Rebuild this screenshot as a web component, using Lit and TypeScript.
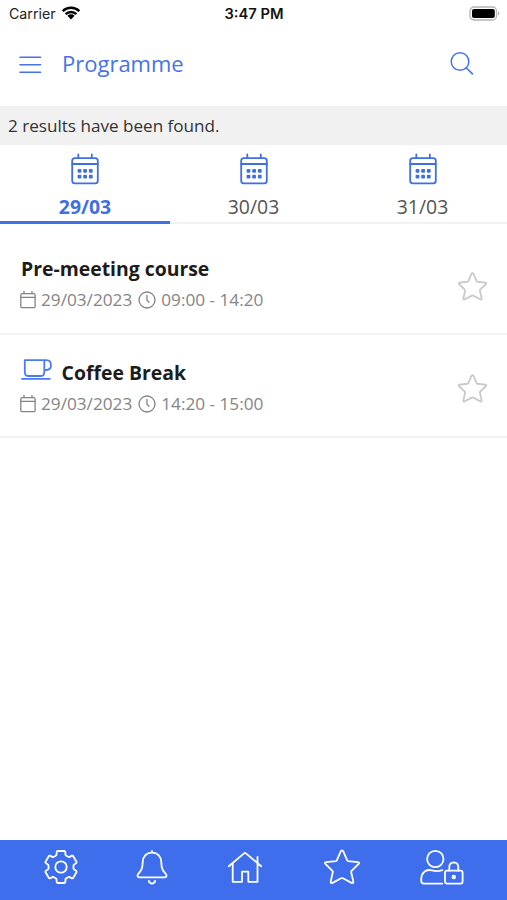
import { LitElement, html, css, svg, nothing } from "lit";
import { customElement, property } from "lit/decorators.js";

interface Session {
  title: string;
  date: string;
  time: string;
  coffee: boolean;
}

const DAYS = ["29/03", "30/03", "31/03"];

const SESSIONS: Session[] = [
  { title: "Pre-meeting course", date: "29/03/2023", time: "09:00 - 14:20", coffee: false },
  { title: "Coffee Break", date: "29/03/2023", time: "14:20 - 15:00", coffee: true },
];

/* Outline of a six-toothed cog centred on 0,0 */
const cogPath = (): string => {
  const tooth = [[-5.8, -11], [-4.5, -12], [-4.3, -15.2], [-3.5, -16], [3.5, -16], [4.3, -15.2], [4.5, -12], [5.8, -11]];
  const pts: string[] = [];
  for (let i = 0; i < 6; i++) {
    const a = (i * Math.PI) / 3;
    for (const [x, y] of tooth) {
      pts.push(`${(x * Math.cos(a) - y * Math.sin(a)).toFixed(2)} ${(x * Math.sin(a) + y * Math.cos(a)).toFixed(2)}`);
    }
  }
  return `M${pts.join("L")}Z`;
};

const STAR = "M18 1.3Q18.8 1.3 19.3 2.4L23.2 11.4Q23.5 12 24.2 12.1L33.8 13.1Q36 13.5 34.4 15.2L27.6 21.8Q27 22.4 27.2 23.2L29.3 32.6Q29.5 34.8 27.5 33.9L18.9 29.3Q18 28.9 17.1 29.3L8.5 33.9Q6.5 34.8 6.7 32.6L8.8 23.2Q9 22.4 8.4 21.8L1.6 15.2Q0 13.5 2.2 13.1L11.8 12.1Q12.5 12 12.8 11.4L16.7 2.4Q17.2 1.3 18 1.3Z";

const ICONS = {
  wifi: { w: 20, h: 14, body: svg`<g fill="none" stroke="currentColor" stroke-width="2.5"><path d="M1.7 5.1A12 12 0 0 1 18.3 5.1"/><path d="M4.6 8.2A7.8 7.8 0 0 1 15.4 8.2"/></g><path fill="currentColor" d="M6.4 9.8A5.2 5.2 0 0 1 13.6 9.8L10 13.6Z"/>` },
  battery: { w: 32, h: 16, body: svg`<rect x="1" y="1" width="26.5" height="13" rx="4" fill="#fff" stroke="#b4b4b4" stroke-width="1.3"/><rect x="3" y="3" width="22.8" height="9" rx="2" fill="#000"/><path d="M29 5.3Q31.6 7.5 29 9.7Z" fill="#aaa"/>` },
  menu: { w: 24, h: 20, body: svg`<path d="M2 2.2H22.5M2 9.7H22.5M2 17.3H22.5"/>` },
  search: { w: 26, h: 26, body: svg`<circle cx="11" cy="10.5" r="8.8"/><path d="M17.2 16.8L23.4 22.9"/>` },
  calendar: { w: 30, h: 34, body: svg`<rect x="2.2" y="6.2" width="25.6" height="25.2" rx="2.6"/><path d="M2.2 12H27.8M8.3 2.4V6.2M21.8 2.4V6.2"/><g fill="currentColor" stroke="none"><rect x="7.6" y="16.9" width="3.8" height="3.8" rx="1"/><rect x="13.2" y="16.9" width="3.8" height="3.8" rx="1"/><rect x="18.9" y="16.9" width="3.8" height="3.8" rx="1"/><rect x="7.6" y="22.7" width="3.8" height="3.8" rx="1"/><rect x="13.2" y="22.7" width="3.8" height="3.8" rx="1"/><rect x="18.9" y="22.7" width="3.8" height="3.8" rx="1"/></g>` },
  date: { w: 16, h: 18, body: svg`<rect x=".8" y="2.7" width="14.3" height="14" rx="1.3"/><path d="M.8 6.3H15.1M4 .5V2.7M12 .5V2.7"/>` },
  clock: { w: 18, h: 18, body: svg`<circle cx="9" cy="9" r="8"/><path d="M9 4.4V9.2L11 11.2"/>` },
  cup: { w: 32, h: 22, body: svg`<path d="M3.8 1.2H23.3V13.2Q23.3 17 19.5 17H7.6Q3.8 17 3.8 13.2ZM23.3 1.2H25.2Q30 1.4 30 6.2Q30 10.8 25.2 11H23.3M1 19.9H28.8"/>` },
  star: { w: 36, h: 36, body: svg`<path d=${STAR}/>` },
  cog: { w: 36, h: 36, body: svg`<g transform="translate(18 18)"><path d=${cogPath()}/><circle r="5.7"/></g>` },
  bell: { w: 32, h: 36, body: svg`<path d="M16 1.8V3.6M16 3.6C10.3 3.6 6.7 7.8 6.7 13.2C6.7 20 4.6 22.3 2.2 25C1 26.4 1.3 28.3 3.2 28.3H28.8C30.7 28.3 31 26.4 29.8 25C27.4 22.3 25.3 20 25.3 13.2C25.3 7.8 21.7 3.6 16 3.6ZM12.8 31.8Q13.5 34.6 16 34.6Q18.5 34.6 19.2 31.8"/>` },
  home: { w: 36, h: 36, body: svg`<path d="M1.8 17.2L17.1 4.4Q18 3.7 18.9 4.4L34.2 17.2M5.7 14.2V32.8H15V22.7H21.3V32.8H30.5V14.2M30.5 13.8V8"/>` },
  profile: { w: 46, h: 38, body: svg`<circle cx="16.3" cy="10" r="8.2"/><path d="M23.3 21.2C20.4 22.2 15.8 22.2 12.8 21.3C6 19.8 2.2 24.4 2.2 30.5V31.8Q2.2 34.6 5 34.6H23.3"/><rect x="26" y="21.7" width="17.6" height="12.9" rx="2"/><path d="M30.3 21.7V17.8Q30.5 13.4 34.8 13.3Q39 13.4 39.3 17.8V21.7"/><circle cx="34.8" cy="28" r="1.3" fill="currentColor"/>` },
};

type IconName = keyof typeof ICONS;

@customElement("ui-icon")
class UiIcon extends LitElement {
  @property() name: IconName = "star";

  static styles = css`
    :host { display: block; flex: none; }
    .glyph {
      display: block; width: 100%; height: 100%; fill: none; stroke: currentColor;
      stroke-width: var(--stroke, 1.8); stroke-linecap: round; stroke-linejoin: round;
    }
    .plain { stroke: none; stroke-linecap: butt; }
  `;

  render() {
    const icon = ICONS[this.name];
    const plain = this.name === "wifi" || this.name === "battery";
    return html`<svg class=${plain ? "glyph plain" : "glyph"} viewBox="0 0 ${icon.w} ${icon.h}">${icon.body}</svg>`;
  }
}

@customElement("session-row")
class SessionRow extends LitElement {
  @property({ attribute: false }) session!: Session;

  static styles = css`
    :host { display: flex; align-items: center; box-sizing: border-box; border-bottom: 2px solid #f3f3f3; padding: 0 15px 0 20px; }
    .body { flex: 1; }
    .head { display: flex; align-items: flex-start; height: 30px; }
    .title { font-size: 19.4px; line-height: 30px; font-weight: 700; color: #1c1c1c; margin: 0 0 0 1px; white-space: nowrap; }
    .cup { width: 32px; height: 22px; color: #4b7af0; margin: 1px 8px 0 .6px; --stroke: 1.8; }
    .meta { display: flex; align-items: center; height: 24px; margin-top: 4px; color: #858585; font-size: 17.2px; line-height: 24px; white-space: nowrap; --stroke: 1.3; }
    .date { width: 16px; height: 18px; margin-right: 5px; }
    .clock { width: 18px; height: 18px; margin: -1px 5px 0 6px; }
    .star { width: 29px; height: 29px; color: #c9c9c9; margin: var(--star-offset, 1px) 4.8px 0 0; --stroke: 2.2; }
  `;

  render() {
    const s = this.session;
    return html`
      <div class="body">
        <div class="head">
          ${s.coffee ? html`<ui-icon class="cup" name="cup"></ui-icon>` : nothing}
          <h2 class="title">${s.title}</h2>
        </div>
        <div class="meta">
          <ui-icon class="date" name="date"></ui-icon><span>${s.date}</span>
          <ui-icon class="clock" name="clock"></ui-icon><span>${s.time}</span>
        </div>
      </div>
      <ui-icon class="star" name="star"></ui-icon>
    `;
  }
}

@customElement("app-root")
class AppRoot extends LitElement {
  static styles = css`
    :host { display: flex; flex-direction: column; height: 900px; background: #fff; font-family: "Open Sans", "Noto Sans", sans-serif; overflow: hidden; }
    .status { display: grid; grid-template-columns: 1fr auto 1fr; align-items: center; height: 28px; flex: none; padding: 0 6px 0 9px; box-sizing: border-box; font: 14.2px/28px Inter, sans-serif; color: #222; }
    .carrier { display: flex; align-items: center; gap: 5px; }
    .wifi { width: 20px; height: 14px; color: #000; margin-top: -3px; }
    .clock { font-size: 14.7px; font-weight: 600; color: #111; margin-right: 2px; }
    .battery { width: 32px; height: 16px; justify-self: end; margin-top: -1px; }
    .header { display: flex; align-items: center; height: 78px; flex: none; box-sizing: border-box; padding: 0 32px 7px 18px; color: #4474e8; }
    .menu { width: 24px; height: 20px; margin-top: 2px; --stroke: 1.6; }
    .page-title { flex: 1; margin: -2px 0 0 20px; font-size: 22px; line-height: 30px; font-weight: 400; }
    .search { width: 26px; height: 26px; --stroke: 1.5; }
    .results { height: 39px; flex: none; background: #f1f1f1; color: #333; font-size: 17.1px; line-height: 39px; padding-left: 8px; }
    .tabs { display: grid; grid-template-columns: repeat(3, 1fr); height: 79px; flex: none; box-sizing: border-box; border-bottom: 2px solid #f1f1f1; }
    .tab { display: flex; flex-direction: column; align-items: center; height: 79px; box-sizing: border-box; padding-top: 7px; font-size: 19.4px; line-height: 28px; color: #555; }
    .tab ui-icon { width: 30px; height: 34px; color: #3f6fe5; margin: 0 0 7px; }
    .active { color: #3f6fe5; font-weight: 700; border-bottom: 3px solid #4171e8; height: 78.5px; margin-right: -1px; }
    .first { height: 111px; padding-top: 9px; --star-offset: 7px; }
    .second { height: 103px; padding-top: 3px; --star-offset: 2px; }
    .list { flex: 1; }
    .footer { display: flex; align-items: center; height: 60px; flex: none; box-sizing: border-box; padding: 0 42px 6px 43px; background: #3f6eed; color: #fff; --stroke: 1.8; }
    .footer ui-icon { width: 36px; height: 36px; }
    .footer .bell { width: 32px; margin: 0 59px 0 57px; }
    .footer .home { margin-right: 61px; }
    .footer .profile { width: 46px; height: 38px; margin: 1px 0 0 59px; }
  `;

  render() {
    return html`
      <div class="status">
        <span class="carrier">Carrier <ui-icon class="wifi" name="wifi"></ui-icon></span>
        <span class="clock">3:47 PM</span>
        <ui-icon class="battery" name="battery"></ui-icon>
      </div>
      <header class="header">
        <ui-icon class="menu" name="menu"></ui-icon>
        <h1 class="page-title">Programme</h1>
        <ui-icon class="search" name="search"></ui-icon>
      </header>
      <div class="results">2 results have been found.</div>
      <nav class="tabs">
        ${DAYS.map((d, i) => html`<div class=${i === 0 ? "tab active" : "tab"}><ui-icon name="calendar"></ui-icon><span>${d}</span></div>`)}
      </nav>
      <main class="list">
        ${SESSIONS.map((s, i) => html`<session-row class=${i === 0 ? "first" : "second"} .session=${s}></session-row>`)}
      </main>
      <nav class="footer">
        <ui-icon name="cog"></ui-icon>
        <ui-icon class="bell" name="bell"></ui-icon>
        <ui-icon class="home" name="home"></ui-icon>
        <ui-icon name="star"></ui-icon>
        <ui-icon class="profile" name="profile"></ui-icon>
      </nav>
    `;
  }
}
